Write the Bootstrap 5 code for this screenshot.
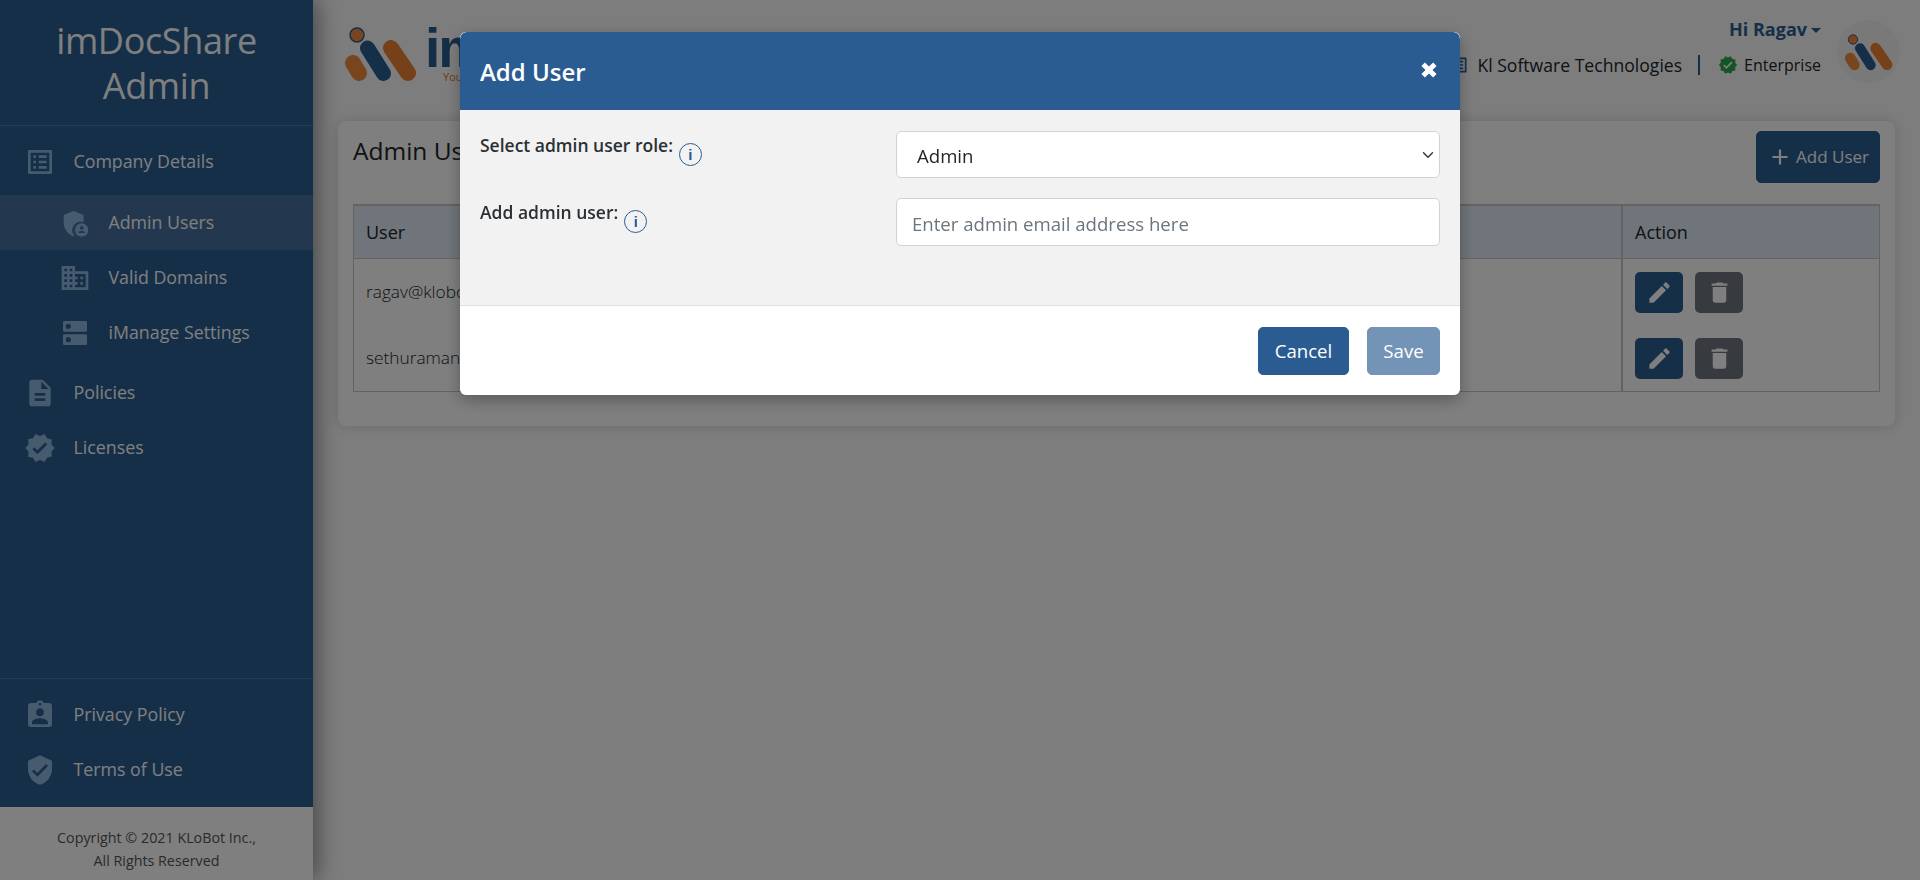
<!DOCTYPE html>
<html lang="en">
<head>
<meta charset="utf-8">
<title>imDocShare Admin</title>
<link href="https://cdn.jsdelivr.net/npm/bootstrap@5.3.0/dist/css/bootstrap.min.css" rel="stylesheet">
<style>
html,body{height:880px;overflow:hidden}
body{font-family:"Open Sans","Noto Sans",sans-serif;background:#fbfbfb;color:#212529;font-size:16px}
svg{fill:currentColor;flex:none}
.side{width:313px;height:880px;background:#2b5e93;box-shadow:4px 0 22px rgba(0,0,0,.45);z-index:2;color:#fff}
.side-title{height:126px;border-bottom:1px solid rgba(255,255,255,.17);font-size:36px;line-height:45px;padding-top:18px;font-weight:400;letter-spacing:-.35px}
.side-nav{padding-top:8px}
.side-link{display:flex;align-items:center;height:55px;padding-left:24px;color:#fff;text-decoration:none;font-size:17.8px;gap:17.500px}
.side-link svg{width:32px;height:32px;color:#8fb6de}
.side-link.sub{padding-left:59px}
.side-link.group-start{margin-top:6px}
.side-link.group-end{margin-top:5px}
.side-link.active-item{background:#47709c}
.side-bottom{border-top:1px solid rgba(255,255,255,.17);padding-top:8px;padding-bottom:10px}
.side-copy{height:73px;background:#fff;color:#555;font-size:14.3px;line-height:23px;padding-top:19px}
.top-head{height:121px;padding:20px 20px 0 32px}
.logo-word{font-family:"Liberation Sans",sans-serif;font-weight:700;font-size:44px;line-height:40px;height:40px;color:#2a5c91;letter-spacing:-1px;margin-top:8px}
.logo-lead{font-size:55px;letter-spacing:-2px}
.logo-mark{margin-right:8px;margin-top:4px}
.logo-tag{font-size:11px;color:#e07a28;display:block;line-height:12px;padding-left:18px;margin-top:3px}
.hi{color:#2b5e93;font-weight:700;font-size:18px;line-height:22px;margin-top:-2px}
.caret-mark{display:inline-block;border-top:5px solid #2b5e93;border-left:5px solid transparent;border-right:5px solid transparent;vertical-align:3px;margin-left:4px}
.org{font-size:17.6px;margin-top:14px;gap:8px;line-height:22px}
.org svg{width:20px;height:20px}
.org-sep{margin:0 2px 0 8px;width:10px;border-left:2px solid #2b5e93;height:20px}
.org-plan{font-size:16px;margin-left:-2px}
.avatar-disc{width:63px;height:63px;border-radius:50%;background:#f2f2f2;margin-left:16px}
.panel{margin:0 25px;background:#fff;border-radius:8px;box-shadow:0 0 14px rgba(0,0,0,.16);padding:10px 15px 29px;height:305px}
.panel-title{font-size:24.5px;font-weight:500;margin:0 0 12px}
.add-btn{width:124px;height:52px;background:#2b5e93;border-color:#2b5e93;color:#fff;font-size:17px;padding:0;border-radius:5px}
.add-btn svg{width:26px;height:26px;margin-right:3px}
.grid-wrap{margin-top:21px;border:2px solid #c6c6c6;border-bottom-width:1px;border-right-width:1px;border-left-width:1px}
.grid-head{height:53px;background:#dfeaf4;border-bottom:1px solid #c6c6c6;font-weight:500;line-height:52px;font-size:18px}
.col-user{padding-left:12px;flex:1}
.col-act{width:258px;padding-left:12px;border-left:2px solid #c6c6c6}
.grid-row{height:66px}
.grid-row .col-user{font-size:17.3px;font-weight:300}
.act-btn{width:48px;height:41px;padding:0;border-radius:5px;border:0;color:#fff}
.act-btn svg{width:27px;height:27px}
.act-edit{background:#2b5e93}
.act-del{background:#6e757c}
.modal-backdrop.show{opacity:.5}
.dlg{max-width:1000px;width:1000px;margin:32px auto 0 460px}
.dlg .modal-content{border:0;border-radius:6px;box-shadow:0 5px 16px rgba(0,0,0,.3);overflow:hidden}
.dlg .modal-header{height:78px;background:#2a5c91;border:0;padding:0 20px;color:#fff}
.dlg .modal-title{font-size:24px;font-weight:600;margin-top:2px}
.x-btn{background:none;border:0;color:#fff;padding:0;line-height:1;display:flex;margin-right:-2px;margin-top:-3px}
.x-btn svg{width:26px;height:26px}
.dlg .modal-body{height:196px;background:#f2f2f2;padding:21px 20px 0;border-bottom:1px solid #dee2e6;flex:none}
.dlg .modal-footer{height:89px;padding:0 20px;border:0;gap:18px;background:#fff;flex-wrap:nowrap}
.dlg .modal-footer>*{margin:0}
.lab-text{font-size:17.5px;font-weight:600;width:416px;line-height:24px;gap:6px;padding-top:2px;color:#2b3035}
.info-dot{width:23px;height:23px;border-radius:50%;border:1px solid #2a5c91;color:#2a5c91;font-size:15px;font-weight:700;display:flex;align-items:center;justify-content:center;font-family:"Liberation Sans",sans-serif;margin-top:10px;flex:none}
.fld{width:544px;border:1px solid #ced4da;border-radius:5px;font-size:18.6px;flex:none}
.fld-select{height:47px;padding:2px 0 0 20px;background-position:right 3px center;background-size:16px 12px}
.fld-input{height:48px;padding:2px 0 0 15px}
.fld-input::placeholder{color:#6c757d}
.dlg .row-a{margin-bottom:20px}
.cancel-btn,.save-btn{height:48px;font-size:18.6px;border-radius:5px;padding:1px 0 0;color:#fff}
.cancel-btn{width:91px;background:#2a5c91;border-color:#2a5c91}
.save-btn{width:73px;background:#2a5c91;border-color:#2a5c91}
.save-btn:disabled{background:#2a5c91;border-color:#2a5c91;opacity:.65;color:#fff}
</style>
</head>
<body class="d-flex">
<aside class="side d-flex flex-column flex-shrink-0">
  <div class="side-title text-center">imDocShare<br>Admin</div>
  <nav class="side-nav flex-grow-1">
    <a class="side-link" href="#"><svg viewBox="0 0 24 24"><path d="M19 5v14H5V5h14m1.100-2H3.900c-.5 0-.9.4-.9.9v16.200c0 .4.4.9.9.9h16.200c.4 0 .9-.5.9-.9V3.900c0-.5-.5-.9-.9-.9zM11 7h6v2h-6V7zm0 4h6v2h-6v-2zm0 4h6v2h-6zM7 7h2v2H7zm0 4h2v2H7zm0 4h2v2H7z"/></svg>Company Details</a>
    <a class="side-link sub active-item group-start" href="#"><svg viewBox="0 0 24 24"><path fill-rule="evenodd" d="M11 3l7.500 3v5.200a6.500 6.500 0 0 0-7 10.300l-.5.500C6.500 20.800 3.500 16.300 3.500 11.500V6z"/><path fill-rule="evenodd" d="M17 12.200a5 5 0 1 1 0 10 5 5 0 0 1 0-10zm0 2a1.400 1.400 0 1 0 0 2.800 1.400 1.400 0 0 0 0-2.800zm-2.600 5.300c.4-1 1.500-1.600 2.600-1.600s2.200.6 2.600 1.600z"/></svg>Admin Users</a>
    <a class="side-link sub" href="#"><svg viewBox="0 0 24 24"><path d="M12 7V3H2v18h20V7H12zM6 19H4v-2h2v2zm0-4H4v-2h2v2zm0-4H4V9h2v2zm0-4H4V5h2v2zm4 12H8v-2h2v2zm0-4H8v-2h2v2zm0-4H8V9h2v2zm0-4H8V5h2v2zm10 12h-8v-2h2v-2h-2v-2h2v-2h-2V9h8v10zm-2-8h-2v2h2v-2zm0 4h-2v2h2v-2z"/></svg>Valid Domains</a>
    <a class="side-link sub" href="#"><svg viewBox="0 0 24 24"><path d="M20 13H4c-.55 0-1 .45-1 1v6c0 .55.45 1 1 1h16c.55 0 1-.45 1-1v-6c0-.55-.45-1-1-1zM7 19c-1.100 0-2-.9-2-2s.9-2 2-2 2 .9 2 2-.9 2-2 2zM20 3H4c-.55 0-1 .45-1 1v6c0 .55.45 1 1 1h16c.55 0 1-.45 1-1V4c0-.55-.45-1-1-1zM7 9c-1.100 0-2-.9-2-2s.9-2 2-2 2 .9 2 2-.9 2-2 2z"/></svg>iManage Settings</a>
    <a class="side-link group-end" href="#"><svg viewBox="0 0 24 24"><path d="M14 2H6c-1.100 0-1.990.9-1.990 2L4 20c0 1.100.89 2 1.990 2H18c1.100 0 2-.9 2-2V8l-6-6zm2 16H8v-2h8v2zm0-4H8v-2h8v2zm-3-5V3.500L18.500 9H13z"/></svg>Policies</a>
    <a class="side-link" href="#"><svg viewBox="0 0 24 24"><path d="M23 12l-2.440-2.780.34-3.680-3.610-.82-1.890-3.180L12 3 8.600 1.540 6.710 4.720l-3.610.81.34 3.680L1 12l2.440 2.780-.34 3.690 3.610.82 1.890 3.180L12 21l3.400 1.460 1.890-3.180 3.610-.82-.34-3.680L23 12zm-12.910 4.720l-3.800-3.810 1.480-1.480 2.320 2.330 5.850-5.870 1.480 1.480-7.330 7.350z"/></svg>Licenses</a>
  </nav>
  <div class="side-bottom">
    <a class="side-link" href="#"><svg viewBox="0 0 24 24"><path d="M19 3h-4.180C14.400 1.840 13.300 1 12 1c-1.300 0-2.400.84-2.820 2H5c-1.100 0-2 .9-2 2v14c0 1.100.9 2 2 2h14c1.100 0 2-.9 2-2V5c0-1.100-.9-2-2-2zm-7 0c.55 0 1 .45 1 1s-.45 1-1 1-1-.45-1-1 .45-1 1-1zm0 4c1.660 0 3 1.340 3 3s-1.340 3-3 3-3-1.340-3-3 1.340-3 3-3zm6 12H6v-1.400c0-2 4-3.100 6-3.100s6 1.100 6 3.100V19z"/></svg>Privacy Policy</a>
    <a class="side-link" href="#"><svg viewBox="0 0 24 24"><path d="M12 1L3 5v6c0 5.550 3.840 10.740 9 12 5.160-1.260 9-6.450 9-12V5l-9-4zm-2 16l-4-4 1.410-1.410L10 14.170l6.590-6.590L18 9l-8 8z"/></svg>Terms of Use</a>
  </div>
  <div class="side-copy text-center">Copyright © 2021 KLoBot Inc.,<br>All Rights Reserved</div>
</aside>
<main class="flex-grow-1">
  <header class="top-head d-flex justify-content-between">
    <div class="d-flex align-items-start">
      <svg class="logo-mark" width="72" height="58" viewBox="0 0 72 58"><circle cx="12" cy="11" r="7" fill="#f08a3c" stroke="#2b5e93" stroke-width="1.500"/><g stroke-linecap="round"><line x1="8" y1="39" x2="14" y2="49" stroke="#f08a3c" stroke-width="16"/><line x1="22.500" y1="24" x2="38.500" y2="49.500" stroke="#2b5e93" stroke-width="15"/><line x1="46" y1="24" x2="63" y2="49" stroke="#ec8030" stroke-width="16"/></g></svg>
      <div><div class="logo-word"><span class="logo-lead">im</span>DocShare</div><span class="logo-tag">Your documents</span></div>
    </div>
    <div class="d-flex align-items-start">
      <div class="text-end">
        <div class="hi">Hi Ragav<span class="caret-mark"></span></div>
        <div class="org d-flex align-items-center"><svg viewBox="0 0 24 24" style="color:#2b5e93"><path d="M19 5v14H5V5h14m1.100-2H3.900c-.5 0-.9.4-.9.9v16.200c0 .4.4.9.9.9h16.200c.4 0 .9-.5.9-.9V3.900c0-.5-.5-.9-.9-.9zM11 7h6v2h-6V7zm0 4h6v2h-6v-2zm0 4h6v2h-6z"/></svg><span>Kl Software Technologies</span><span class="org-sep"></span><svg viewBox="0 0 24 24" style="color:#2ba84a"><path d="M23 12l-2.440-2.780.34-3.680-3.610-.82-1.890-3.180L12 3 8.600 1.540 6.710 4.720l-3.610.81.34 3.680L1 12l2.440 2.780-.34 3.690 3.610.82 1.890 3.180L12 21l3.400 1.460 1.890-3.180 3.610-.82-.34-3.680L23 12zm-12.910 4.720l-3.800-3.810 1.480-1.480 2.320 2.330 5.850-5.870 1.480 1.480-7.330 7.350z"/></svg><span class="org-plan">Enterprise</span></div>
      </div>
      <div class="avatar-disc d-flex align-items-center justify-content-center">
        <svg width="48" height="39" viewBox="0 0 72 58"><circle cx="12" cy="11" r="7" fill="#f08a3c" stroke="#2b5e93" stroke-width="1.500"/><g stroke-linecap="round"><line x1="8" y1="39" x2="14" y2="49" stroke="#f08a3c" stroke-width="16"/><line x1="22.500" y1="24" x2="38.500" y2="49.500" stroke="#2b5e93" stroke-width="15"/><line x1="46" y1="24" x2="63" y2="49" stroke="#ec8030" stroke-width="16"/></g></svg>
      </div>
    </div>
  </header>
  <section class="panel">
    <div class="d-flex justify-content-between align-items-center">
      <h1 class="panel-title">Admin Users</h1>
      <button class="btn add-btn d-flex align-items-center justify-content-center"><svg viewBox="0 0 24 24"><path d="M19 13h-6v6h-2v-6H5v-2h6V5h2v6h6v2z"/></svg>Add User</button>
    </div>
    <div class="grid-wrap">
      <div class="grid-head d-flex"><div class="col-user">User</div><div class="col-act">Action</div></div>
      <div class="grid-row d-flex"><div class="col-user d-flex align-items-center">ragav@klobot.ai</div><div class="col-act d-flex align-items-center gap-2"><button class="btn act-btn act-edit"><svg viewBox="0 0 24 24"><path d="M3 17.250V21h3.750L17.810 9.940l-3.750-3.750L3 17.250zM20.710 7.040c.39-.39.39-1.020 0-1.410l-2.340-2.340c-.39-.39-1.020-.39-1.410 0l-1.830 1.830 3.750 3.750 1.830-1.830z"/></svg></button><button class="btn act-btn act-del ms-1"><svg viewBox="0 0 24 24"><path d="M6 19c0 1.100.9 2 2 2h8c1.100 0 2-.9 2-2V7H6v12zM19 4h-3.500l-1-1h-5l-1 1H5v2h14V4z"/></svg></button></div></div>
      <div class="grid-row d-flex"><div class="col-user d-flex align-items-center">sethuraman@klobot.ai</div><div class="col-act d-flex align-items-center gap-2"><button class="btn act-btn act-edit"><svg viewBox="0 0 24 24"><path d="M3 17.250V21h3.750L17.810 9.940l-3.750-3.750L3 17.250zM20.710 7.040c.39-.39.39-1.020 0-1.410l-2.340-2.340c-.39-.39-1.020-.39-1.410 0l-1.830 1.830 3.750 3.750 1.830-1.830z"/></svg></button><button class="btn act-btn act-del ms-1"><svg viewBox="0 0 24 24"><path d="M6 19c0 1.100.9 2 2 2h8c1.100 0 2-.9 2-2V7H6v12zM19 4h-3.500l-1-1h-5l-1 1H5v2h14V4z"/></svg></button></div></div>
    </div>
  </section>
</main>
<div class="modal-backdrop show"></div>
<div class="modal d-block" tabindex="-1">
  <div class="modal-dialog dlg">
    <div class="modal-content">
      <div class="modal-header">
        <h5 class="modal-title">Add User</h5>
        <button type="button" class="x-btn" aria-label="Close"><svg viewBox="0 0 24 24"><path d="M5 8.200L8.200 5 12 8.800 15.800 5 19 8.200 15.200 12 19 15.800 15.800 19 12 15.200 8.200 19 5 15.800 8.800 12z"/></svg></button>
      </div>
      <div class="modal-body">
        <div class="d-flex row-a">
          <div class="lab-text d-flex align-items-start">Select admin user role:<span class="info-dot">i</span></div>
          <select class="form-select fld fld-select"><option>Admin</option></select>
        </div>
        <div class="d-flex">
          <div class="lab-text d-flex align-items-start">Add admin user:<span class="info-dot">i</span></div>
          <input class="form-control fld fld-input" placeholder="Enter admin email address here">
        </div>
      </div>
      <div class="modal-footer">
        <button class="btn cancel-btn">Cancel</button>
        <button class="btn save-btn" disabled>Save</button>
      </div>
    </div>
  </div>
</div>
<script src="https://cdn.jsdelivr.net/npm/bootstrap@5.3.0/dist/js/bootstrap.bundle.min.js"></script>
</body>
</html>
